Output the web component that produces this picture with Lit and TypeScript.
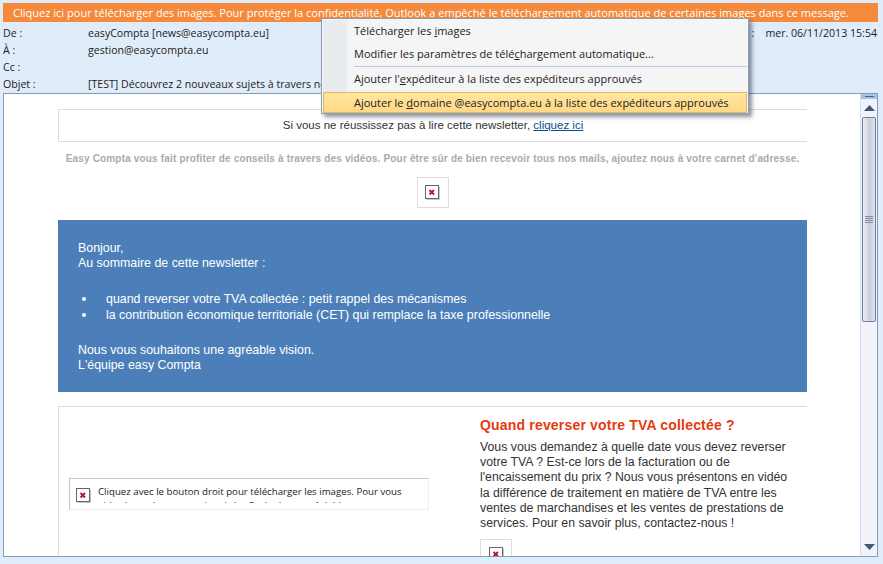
import { LitElement, html, css } from "lit";
import { customElement } from "lit/decorators.js";

const brokenIcon = html`<svg class="bi" width="15" height="15" viewBox="0 0 15 15"><rect x="0.5" y="0.5" width="13" height="13" fill="#fff" stroke="#666"/><path d="M14.5 1.5V14.5H1.5" fill="none" stroke="#c4c4c4"/><path d="M4.5 5l4.5 4.5M9 5l-4.5 4.5" stroke="#b8102e" stroke-width="1.8"/></svg>`;

@customElement("app-root")
export class AppRoot extends LitElement {
  static styles = css`
    :host { display: block; width: 883px; height: 564px; overflow: hidden; position: relative; background: #e1ecfb; font-family: "Open Sans", "Noto Sans", sans-serif; font-size: 10.6px; color: #222; }
    .wrap { display: flex; flex-direction: column; height: 564px; padding: 3px 5px 7px 3px; box-sizing: border-box; background: #e1ecfb; }
    .info { height: 19px; flex: none; background: #f58a3c; color: #fff; line-height: 19px; padding-left: 10px; font-size: 11px; letter-spacing: 0.015px; white-space: nowrap; overflow: hidden; }
    .hdr { flex: none; padding-top: 3px; display: grid; grid-template-rows: repeat(4, 17px); }
    .row { display: grid; grid-template-columns: 85px 1fr auto; line-height: 17px; white-space: nowrap; }
    .row .date { padding-right: 1px; }
    .frame { flex: 1; min-height: 0; display: flex; border: 1px solid #7f9db9; background: #fff; overflow: hidden; }
    .msg { flex: 1; min-width: 0; overflow: hidden; padding: 15px 53px 0 54px; font-family: "Liberation Sans", Arial, sans-serif; font-size: 12.3px; color: #333; }
    .top { height: 31px; border: 1px solid #dcdcdc; border-right: 0; text-align: center; line-height: 30px; font-size: 11.5px; }
    .top a { color: #0b4a8f; text-decoration: underline; }
    .note { margin-top: 10px; height: 14px; line-height: 14px; text-align: center; font-size: 10px; font-weight: bold; color: #aaa; letter-spacing: 0.17px; white-space: nowrap; }
    .logo { display: flex; justify-content: center; margin-top: 11px; }
    .imgbox { width: 30px; height: 29px; border: 1px solid #ddd; display: flex; align-items: center; justify-content: center; }
    .bi { display: block; }
    .band { margin-top: 12px; height: 172px; box-sizing: border-box; background: #4c7fba; color: #fff; padding: 21px 20px 0; line-height: 15px; font-size: 12.4px; }
    .band p { margin: 0; }
    .band ul { margin: 20px 0 20px; padding: 0 0 0 28px; list-style: none; line-height: 16px; }
    .band li { position: relative; }
    .band li::before { content: ""; position: absolute; left: -24px; top: 6px; width: 4px; height: 4px; border-radius: 50%; background: #fff; }
    .card { margin-top: 14px; height: 170px; border: 1px solid #dcdcdc; border-bottom: 0; border-right: 0; display: flex; overflow: hidden; }
    .left { width: 421px; flex: none; padding: 71px 0 0 10px; box-sizing: border-box; }
    .ph { width: 360px; height: 32px; box-sizing: border-box; border: 1px solid #c4c4c4; border-right-color: #eee; border-bottom-color: #eee; display: flex; gap: 7px; padding: 6px 0 0 6px; overflow: hidden; font-family: "Open Sans", sans-serif; font-size: 9.7px; color: #222; line-height: 14px; }
    .ph .bi { flex: none; margin-top: 3px; }
    .ph div { height: 18px; overflow: hidden; width: 308px; }
    .right { flex: 1; padding: 10px 0 0 0; }
    h2 { margin: 0; font-size: 14px; line-height: 16px; font-weight: bold; color: #e83a10; letter-spacing: 0.18px; }
    .right p { margin: 7px 0 0; width: 316px; line-height: 15.2px; }
    .right .imgbox { margin-top: 8px; }
    .sb { width: 16px; flex: none; margin-left: auto; background: #f1f3f8; display: flex; flex-direction: column; align-items: center; border-left: 1px solid #d4dfef; }
    .split { width: 100%; height: 5px; flex: none; background: #a9c2e8; display: flex; justify-content: center; align-items: center; }
    .split i { width: 9px; height: 1px; background: #4a5f85; }
    .arrow { height: 18px; flex: none; display: flex; align-items: center; justify-content: center; }
    .thumb { width: 14px; height: 205px; flex: none; box-sizing: border-box; border: 1px solid #6e7f9e; border-radius: 2px; background: linear-gradient(90deg, #eef0f6, #c8cede 55%, #dfe3ee); display: flex; flex-direction: column; gap: 1px; align-items: center; justify-content: center; }
    .thumb i { width: 8px; height: 1px; background: #808aa0; }
    .track { flex: 1; }
    .menu { position: absolute; left: 321px; top: 18px; width: 428px; height: 96px; box-sizing: border-box; background: #f5f5f6; border: 1px solid #8c9db8; box-shadow: 3px 3px 4px rgba(50,60,80,.55); font-size: 11px; color: #222; padding: 1px; display: flex; flex-direction: column; }
    .menu::before { content: ""; position: absolute; left: 1px; top: 1px; bottom: 1px; width: 24px; background: #e9ecee; }
    .mi { position: relative; flex: none; padding-left: 31px; height: 23px; line-height: 22px; white-space: nowrap; }
    .sep { position: relative; flex: none; height: 1px; margin-left: 31px; background: #b9cbe6; }
    .mi.c { height: 25px; line-height: 24px; }
    .mi.hot { height: 21px; line-height: 19px; box-sizing: border-box; background: linear-gradient(#ffe6a0, #ffd884); border: 1px solid #e2b768; padding-left: 30px; }
    .mi u { text-underline-offset: 1px; }
  `;

  render() {
    return html`
      <div class="wrap">
        <div class="info">Cliquez ici pour télécharger des images. Pour protéger la confidentialité, Outlook a empêché le téléchargement automatique de certaines images dans ce message.</div>
        <div class="hdr">
          <div class="row"><span>De :</span><span>easyCompta [news@easycompta.eu]</span><span class="date">:&nbsp;&nbsp;&nbsp; mer. 06/11/2013 15:54</span></div>
          <div class="row"><span>À :</span><span>gestion@easycompta.eu</span></div>
          <div class="row"><span>Cc :</span><span></span></div>
          <div class="row"><span>Objet :</span><span>[TEST] Découvrez 2 nouveaux sujets à travers nos vidéos</span></div>
        </div>
        <div class="frame">
          <div class="msg">
            <div class="top">Si vous ne réussissez pas à lire cette newsletter, <a href="#">cliquez ici</a></div>
            <div class="note">Easy Compta vous fait profiter de conseils à travers des vidéos. Pour être sûr de bien recevoir tous nos mails, ajoutez nous à votre carnet d'adresse.</div>
            <div class="logo"><div class="imgbox">${brokenIcon}</div></div>
            <div class="band">
              <p>Bonjour,<br />Au sommaire de cette newsletter :</p>
              <ul>
                <li>quand reverser votre TVA collectée : petit rappel des mécanismes</li>
                <li>la contribution économique territoriale (CET) qui remplace la taxe professionnelle</li>
              </ul>
              <p>Nous vous souhaitons une agréable vision.<br />L'équipe easy Compta</p>
            </div>
            <div class="card">
              <div class="left">
                <div class="ph">${brokenIcon}<div>Cliquez avec le bouton droit pour télécharger les images. Pour vous aider à protéger votre vie privée, Outlook a empêché le téléchargement</div></div>
              </div>
              <div class="right">
                <h2>Quand reverser votre TVA collectée ?</h2>
                <p>Vous vous demandez à quelle date vous devez reverser votre TVA ? Est-ce lors de la facturation ou de l'encaissement du prix ? Nous vous présentons en vidéo la différence de traitement en matière de TVA entre les ventes de marchandises et les ventes de prestations de services. Pour en savoir plus, contactez-nous !</p>
                <div class="imgbox">${brokenIcon}</div>
              </div>
            </div>
          </div>
          <div class="sb">
            <div class="split"><i></i></div>
            <div class="arrow"><svg width="11" height="6" viewBox="0 0 11 6"><path d="M5.5 0L11 6H0z" fill="#46557a"/></svg></div>
            <div class="thumb"><i></i><i></i><i></i><i></i></div>
            <div class="track"></div>
            <div class="arrow"><svg width="11" height="6" viewBox="0 0 11 6"><path d="M0 0H11L5.5 6z" fill="#46557a"/></svg></div>
          </div>
        </div>
      </div>
      <div class="menu">
        <div class="mi">Télécharger les <u>i</u>mages</div>
        <div class="mi">Modifier les paramètres de télé<u>c</u>hargement automatique...</div>
        <div class="sep"></div>
        <div class="mi c">Ajouter l'<u>e</u>xpéditeur à la liste des expéditeurs approuvés</div>
        <div class="mi hot">Ajouter le <u>d</u>omaine @easycompta.eu à la liste des expéditeurs approuvés</div>
      </div>
    `;
  }
}
